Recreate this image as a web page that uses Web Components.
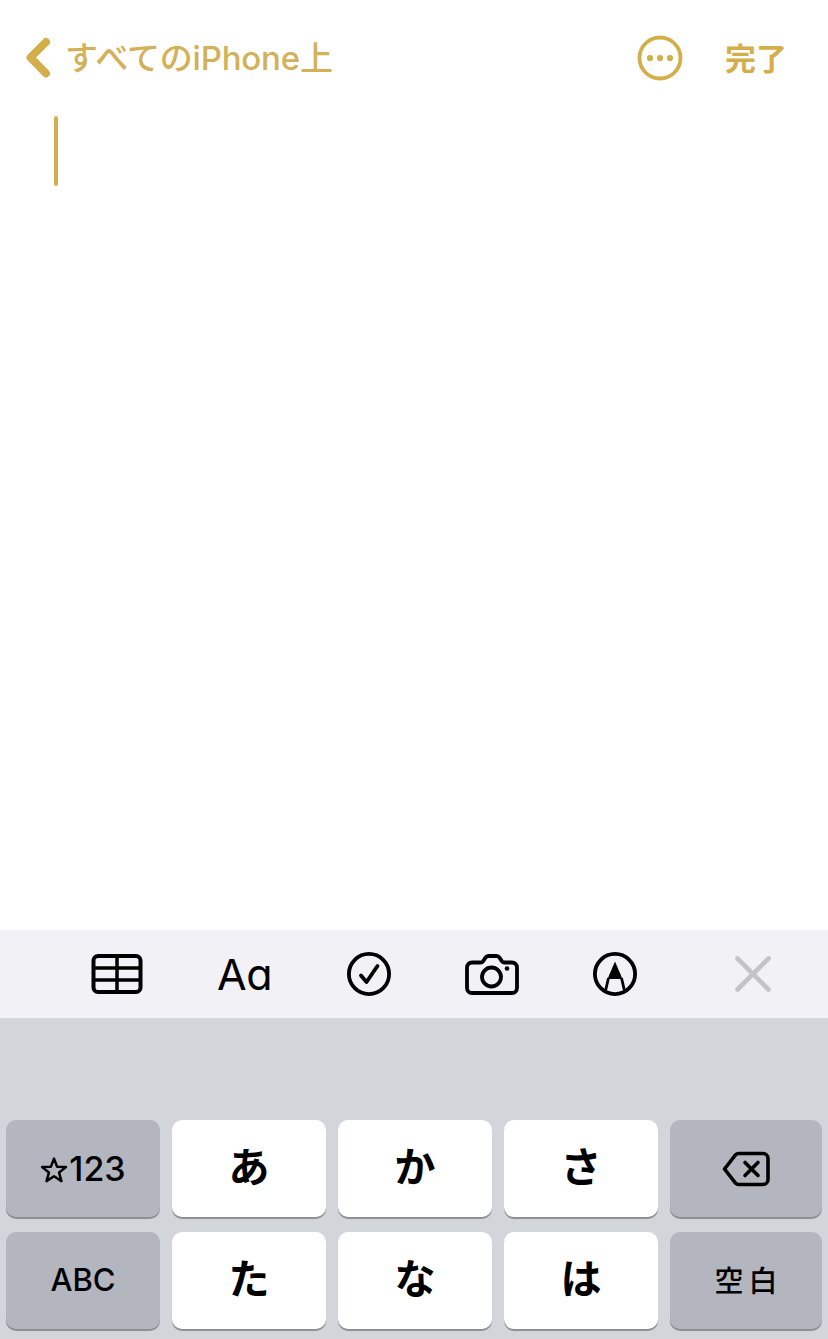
<!DOCTYPE html>
<html lang="ja"><head><meta charset="utf-8">
<style>
html,body{margin:0;padding:0;background:#fff}
body{width:828px;height:1339px;overflow:hidden;display:flex;flex-direction:column;font-family:"Noto Sans CJK JP","Inter",sans-serif}
</style></head><body>
<note-header></note-header>
<note-editor></note-editor>
<note-toolbar></note-toolbar>
<kana-keyboard>
<kb-key kind="fn" size="34" weight="500" font="Inter"><svg width="28" height="28" viewBox="0 0 27 27" fill="none" stroke="#000" stroke-width="2.400" stroke-linejoin="round" style="margin:2px 1px 0 0"><path d="M13.500 2.500l3 7.800 8.500.4-6.600 5.300 2.300 8.200-7.200-4.700-7.200 4.700 2.300-8.200L2 10.700l8.500-.4z"/></svg>123</kb-key>
<kb-key size="41">あ</kb-key><kb-key size="41">か</kb-key><kb-key size="41">さ</kb-key>
<kb-key kind="fn"><svg width="48" height="36" viewBox="0 0 48 36" fill="none" stroke="#000" stroke-width="3.600" stroke-linejoin="round" stroke-linecap="round"><path d="M16.500 2.500H41a5 5 0 0 1 5 5v21a5 5 0 0 1-5 5H16.500a4 4 0 0 1-2.800-1.200L2.500 18 13.700 3.700a4 4 0 0 1 2.800-1.200z"/><path d="M23 11.500l13 13M36 11.500l-13 13"/></svg></kb-key>
<kb-key kind="fn" size="31" weight="500" font="Inter" lift="3">ABC</kb-key>
<kb-key size="41">た</kb-key><kb-key size="41">な</kb-key><kb-key size="41">は</kb-key>
<kb-key kind="fn" size="29" weight="500" spacing="5" lift="3" shift="5">空白</kb-key>
</kana-keyboard>
<script>
const def=(name,html,init)=>customElements.define(name,class extends HTMLElement{
 constructor(){super();this.attachShadow({mode:'open'}).innerHTML=typeof html==='function'?html(this):html}
 connectedCallback(){init&&init(this)}
});
const GOLD='#d4ae4a';
def('note-header',`<style>
:host{display:flex;align-items:center;height:116px;box-sizing:border-box;padding:0 41px 0 22px;color:${GOLD};flex:none}
.c{display:block;margin-right:8px}
.t{font:500 33px/1 "Inter","Noto Sans CJK JP",sans-serif;letter-spacing:-.2px;color:#d3b158;white-space:nowrap}
.sp{flex:1}
.m{display:block;margin-right:42px}
.d{font:700 31px/1 "Noto Sans CJK JP",sans-serif;letter-spacing:0;padding-bottom:3px}
</style>
<svg class="c" width="35" height="44" viewBox="0 0 35 44" fill="none" stroke="${GOLD}" stroke-width="8" stroke-linecap="round" stroke-linejoin="round"><path d="M24 6L8.500 21.500 24 37.500"/></svg>
<span class="t" lang="ja">すべてのiPhone上</span><span class="sp"></span>
<svg class="m" width="46" height="46" viewBox="0 0 46 46"><circle cx="23" cy="23" r="20.500" fill="none" stroke="${GOLD}" stroke-width="3.800"/><circle cx="13" cy="23" r="3.100" fill="${GOLD}"/><circle cx="23" cy="23" r="3.100" fill="${GOLD}"/><circle cx="33" cy="23" r="3.100" fill="${GOLD}"/></svg>
<span class="d" lang="ja">完了</span>`);
def('note-editor',`<style>
:host{display:block;flex:1;background:#fff;padding-left:54px}
.caret{width:4px;height:70px;border-radius:2px;background:${GOLD}}
</style><div class="caret"></div>`);
def('note-toolbar',`<style>
:host{display:flex;align-items:center;flex:none;height:88px;background:#f1f1f6;box-sizing:border-box;padding:0 0 0 91px;gap:74px}
svg{display:block;flex:none}
.a{font:400 43px/1 "Inter","DejaVu Sans",sans-serif;color:#000;width:55px;white-space:nowrap;letter-spacing:-.5px;margin:0 1px 0 0}
.x{margin-left:24px}
</style>
<svg width="52" height="42" viewBox="0 0 52 42" fill="none" stroke="#000" stroke-width="4"><rect x="2.500" y="3" width="47" height="36" rx="4.500"/><path stroke-width="3.500" d="M2.500 15h47M2.500 27h47M26 3v36"/></svg>
<span class="a">Aɑ</span>
<svg width="44" height="44" viewBox="0 0 44 44" fill="none" stroke="#000" stroke-width="3.800" stroke-linecap="round" stroke-linejoin="round"><circle cx="22" cy="22" r="20.100"/><path d="M14 23.500l5.500 6.500L30.500 14"/></svg>
<svg width="54" height="42" viewBox="0 0 54 42" fill="none" stroke="#000" stroke-width="3.800" stroke-linejoin="round"><path d="M7 9.500h8.500a3 3 0 0 0 2.500-1.200l2.500-3.600a4 4 0 0 1 3-1.700h8a4 4 0 0 1 3 1.700L37 8.300a3 3 0 0 0 2.500 1.200H47a5 5 0 0 1 5 5V35a5 5 0 0 1-5 5H7a5 5 0 0 1-5-5V14.500a5 5 0 0 1 5-5z"/><circle cx="26.500" cy="24" r="9.500"/><circle cx="42" cy="15.500" r="2.300" fill="#000" stroke="none"/></svg>
<svg width="44" height="44" viewBox="0 0 44 44" fill="none" stroke="#000" stroke-width="3.800"><circle cx="22" cy="22" r="20.100"/><path d="M22 9.500L29.500 27H14.500z" fill="#000" stroke="none"/><path stroke-width="2.800" d="M15.500 26l-3.500 15M28.500 26l3.500 15"/></svg>
<svg class="x" width="36" height="36" viewBox="0 0 36 36" stroke="#c4c4c8" stroke-width="4.600" stroke-linecap="round"><path d="M2.500 2.500l31 31M33.500 2.500l-31 31"/></svg>`);
def('kana-keyboard',`<style>
:host{display:grid;flex:none;height:321px;box-sizing:border-box;background:#d2d5da;padding:102px 6px 0;grid-template-columns:154px 154px 154px 154px 152px;grid-auto-rows:97px;gap:15px 12px}
</style><slot></slot>`);
def('kb-key',el=>{
 const fn=el.getAttribute('kind')==='fn';
 const size=el.getAttribute('size')||30, w=el.getAttribute('weight')||700, sp=el.getAttribute('spacing')||0, f=el.getAttribute('font');
 const lift=el.getAttribute('lift')||(fn?0:8), shift=el.getAttribute('shift')||0;
 return `<style>
:host{display:flex;align-items:center;justify-content:center;border-radius:10px;background:${fn?'#b3b6bf':'#fff'};box-shadow:0 2px 0 #8e9095;color:#000;
font:${w} ${size}px/1 ${f?`"${f}",`:''}"Noto Sans CJK JP",sans-serif;letter-spacing:${sp}px;padding:0 0 ${lift}px ${shift}px;box-sizing:border-box}
</style><slot></slot>`});
</script>
</body></html>
